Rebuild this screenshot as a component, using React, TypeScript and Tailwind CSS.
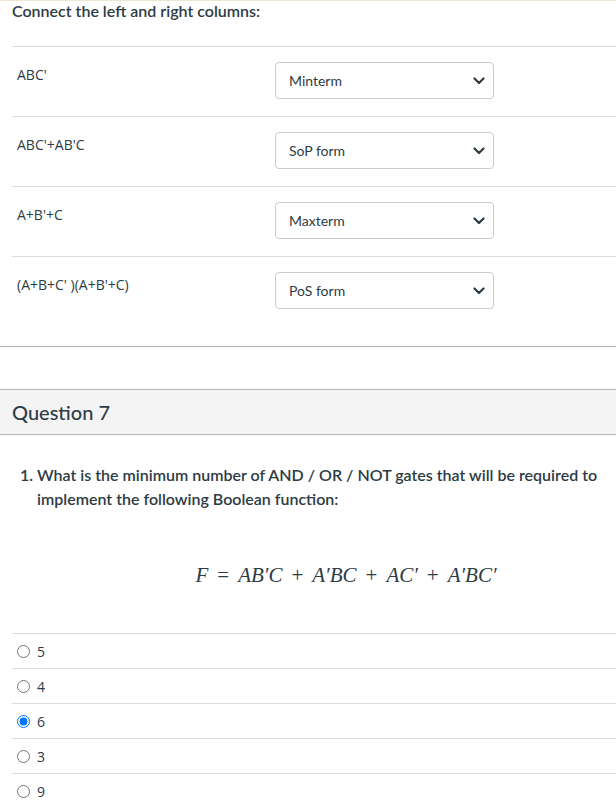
import React from 'react';

const pairs = [
  { left: "ABC'", right: 'Minterm' },
  { left: "ABC'+AB'C", right: 'SoP form' },
  { left: "A+B'+C", right: 'Maxterm' },
  { left: "(A+B+C' )(A+B'+C)", right: 'PoS form' },
];

const answers = [
  { label: '5', checked: false },
  { label: '4', checked: false },
  { label: '6', checked: true },
  { label: '3', checked: false },
  { label: '9', checked: false },
];

const Chevron = () => (
  <svg width="12" height="8" viewBox="0 0 12 8" className="shrink-0">
    <path d="M1.5 1.5 L6 6 L10.5 1.5" fill="none" stroke="#2d3b45" strokeWidth="2.2" strokeLinecap="round" strokeLinejoin="round" />
  </svg>
);

const Op = ({ c }: { c: string }) => <span className="not-italic mx-[9px]">{c}</span>;

export default function App() {
  return (
    <div className="w-[616px] min-h-[810px] bg-white text-[#2d3b45] font-['Lato',sans-serif] border-t border-[#efe6cf]">
      {/* matching question */}
      <div className="pl-3">
        <div className="text-[16px] leading-[20px] font-semibold h-[45px]">Connect the left and right columns:</div>
        {pairs.map((p) => (
          <div key={p.left} className="flex border-t border-[#dcdcdc] h-[70px]">
            <div className="w-[263px] pl-[5px] pt-[18px] text-[14px] leading-[20px] font-['Open_Sans',sans-serif] text-[#2d3b45]">
              {p.left}
            </div>
            <div className="pt-[15px]">
              <div className="w-[219px] h-[37px] rounded-[4px] border border-[#c7cdd1] flex items-center justify-between pl-[13px] pr-[8px] text-[14px]">
                <span>{p.right}</span>
                <Chevron />
              </div>
            </div>
          </div>
        ))}
      </div>
      <div className="h-[20px]" />
      <div className="border-t border-[#b4b4b4] h-[43px]" />

      {/* question 7 header */}
      <div className="border-y border-[#b4b4b4] bg-[#f4f4f4] h-[46px] flex items-center pl-3 text-[20px] font-medium">
        Question 7
      </div>

      <div className="pl-[20px] pr-3 pt-[28px] text-[16px] leading-[24px] font-semibold flex">
        <span className="w-[17px] shrink-0">1.</span>
        <span>
          What is the minimum number of AND / OR / NOT gates that will be required to implement the following Boolean function:
        </span>
      </div>

      <div className="h-[76px] flex items-end justify-center pl-[76px]">
        <span className="font-['Liberation_Serif',serif] text-[21px] italic leading-[24px] whitespace-nowrap">
          F<Op c="=" />AB′C<Op c="+" />A′BC<Op c="+" />AC′<Op c="+" />A′BC′
        </span>
      </div>

      {/* answers */}
      <div className="pl-3 mt-[46px]">
        {answers.map((a) => (
          <div key={a.label} className="flex items-center h-[35px] border-t border-[#dcdcdc] pl-[5px] gap-[7px] text-[14px] font-['Open_Sans',sans-serif]">
            <input type="radio" checked={a.checked} readOnly className="w-[13px] h-[13px] m-0" />
            <span>{a.label}</span>
          </div>
        ))}
      </div>
    </div>
  );
}
